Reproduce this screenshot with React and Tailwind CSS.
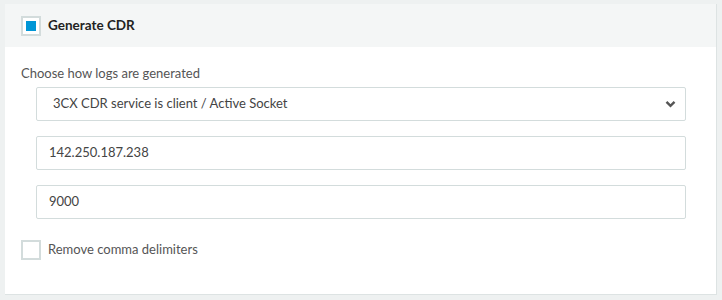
import React from "react";

export default function App() {
  return (
    <div
      className="w-[722px] h-[300px] bg-[#eef1f1] pt-[4px] pl-[5px] pr-[5px]"
      style={{ fontFamily: '"Source Sans Pro", Lato, "Noto Sans", sans-serif' }}
    >
      <div className="h-[291px] bg-white border-r border-b border-[#dde3e3]">
        <div className="h-[43px] bg-[#f4f6f6] flex items-center pl-[16px]">
          <div className="w-[20px] h-[20px] border-2 border-[#d3dcdc] bg-white flex items-center justify-center">
            <div className="w-[10px] h-[10px] bg-[#0096d6]" />
          </div>
          <span className="ml-[7px] text-[13.5px] font-bold text-[#222]">Generate CDR</span>
        </div>
        <div className="pl-[16px] pr-[30px] pt-[17px]">
          <div className="text-[13px] leading-[18px] text-[#555]">Choose how logs are generated</div>
          <div className="ml-[15px] mt-[5px] flex flex-col gap-[15px]">
            <div className="h-[34px] border border-[#d3dcdc] rounded-[2px] flex items-center justify-between pl-[16px] pr-[9px]">
              <span className="text-[13px] text-[#444]">3CX CDR service is client / Active Socket</span>
              <svg width="11" height="8" viewBox="0 0 11 8">
                <path d="M1.5 1.8 L5.5 5.8 L9.5 1.8" fill="none" stroke="#555" strokeWidth="2.4" />
              </svg>
            </div>
            <div className="h-[34px] border border-[#d3dcdc] rounded-[2px] flex items-center pl-[12px]">
              <span className="text-[13px] text-[#444]">142.250.187.238</span>
            </div>
            <div className="h-[34px] border border-[#d3dcdc] rounded-[2px] flex items-center pl-[12px]">
              <span className="text-[13px] text-[#444]">9000</span>
            </div>
          </div>
          <div className="mt-[21px] flex items-center">
            <div className="w-[20px] h-[20px] border-2 border-[#d3dcdc] bg-white" />
            <span className="ml-[7px] text-[13px] text-[#555]">Remove comma delimiters</span>
          </div>
        </div>
      </div>
    </div>
  );
}
